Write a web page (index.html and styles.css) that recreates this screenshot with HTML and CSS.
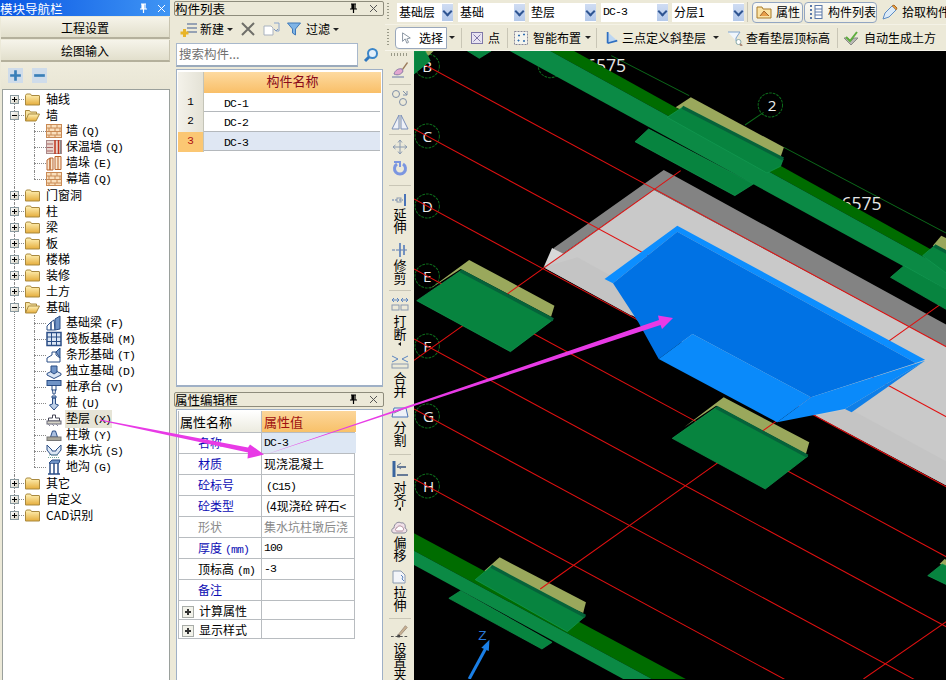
FILE: index.html
```html
<!DOCTYPE html>
<html lang="zh-CN">
<head>
<meta charset="utf-8">
<title>模块导航栏</title>
<link rel="stylesheet" href="styles.css">
</head>
<body>
<svg class="defs" aria-hidden="true">
  <defs>
    <linearGradient id="fold" x1="0" y1="0" x2="0" y2="1"><stop offset="0" stop-color="#fff2b8"/><stop offset="1" stop-color="#e5ad3c"/></linearGradient>
    <symbol id="folder" viewBox="0 0 15 13"><path d="M.5 2.5 1.5 1h4l1 1.500h7.500a.5.5 0 0 1 .5.5v9H.5z" fill="url(#fold)" stroke="#a9893f"/></symbol>
    <symbol id="folderopen" viewBox="0 0 15 13"><path d="M.5 12V1.500h4l1 1.500h6v2" fill="#f6e2a0" stroke="#a9893f"/><path d="M.5 12 3.500 5H14.500l-3.500 7z" fill="url(#fold)" stroke="#a9893f"/></symbol>
    <symbol id="brick" viewBox="0 0 16 16"><rect x=".5" y="1.500" width="15" height="13" fill="#f9dfbd" stroke="#c98a55"/><path d="M0 5h16M0 8.500h16M0 12h16M5 1.500V5M11 1.500V5M3 5v3.500M9 5v3.500M14 5v3.500M5 8.500V12M11 8.500V12M3 12v2.500M9 12v2.500" stroke="#c98a55" fill="none"/></symbol>
    <symbol id="insul" viewBox="0 0 16 16"><rect x=".5" y="1.500" width="15" height="13" fill="#e8d4cc" stroke="#a88"/><path d="M1 5h6M1 8.500h6M1 12h6" stroke="#a66" fill="none"/><path d="M9 1v14M12.500 1v14" stroke="#c0341c" stroke-width="1.500"/><path d="M14.500 1v14" stroke="#888"/></symbol>
    <symbol id="pier" viewBox="0 0 16 16"><path d="M1 5 4 3v12H1zM4 3h3v12H4zM9 1.500h6v13H9z" fill="#fbe8d0" stroke="#b9652f"/><path d="M12 1.500v13" stroke="#b9652f"/></symbol>
    <symbol id="fbeam" viewBox="0 0 16 16"><path d="M1 15V11l4-4V15zM5 7l3-2 1 10H5z" fill="#fff" stroke="#2b4e86"/><path d="M9 4l5-3v13l-5 1z" fill="#6f93c6" stroke="#2b4e86"/></symbol>
    <symbol id="fraft" viewBox="0 0 16 16"><rect x="1" y="1.500" width="14" height="13" fill="#dbe6f4" stroke="#2b4e86" stroke-width="1.500"/><path d="M5.500 1.500v13M10.500 1.500v13M1 6h14M1 10.500h14" stroke="#2b4e86"/></symbol>
    <symbol id="fstrip" viewBox="0 0 16 16"><path d="M1 15h13v-4L10 8V5H6v3l-5 3z" fill="#fff" stroke="#2b4e86"/><path d="M10 5l4-4v10z" fill="#6f93c6" stroke="#2b4e86"/></symbol>
    <symbol id="fisol" viewBox="0 0 16 16"><path d="M1 10.500 8 7l7 3.500v1.500l-7 3.500-7-3.500z" fill="#dbe6f4" stroke="#2b4e86"/><path d="M5 3h6v6L8 11 5 9z" fill="#6f93c6" stroke="#2b4e86"/></symbol>
    <symbol id="fcap" viewBox="0 0 16 16"><rect x="1" y="1.500" width="14" height="5" fill="#6f93c6" stroke="#2b4e86"/><path d="M6 6.500h4V11H6zM5.500 11h1L7 15h2l.5-4h1" fill="#fff" stroke="#2b4e86"/></symbol>
    <symbol id="fpile" viewBox="0 0 16 16"><path d="M6 1h4v2H6zM6.500 3h3v6l3 1-4.500 5-4.500-5 3-1z" fill="#bed0e8" stroke="#2b4e86"/></symbol>
    <symbol id="fpad" viewBox="0 0 16 16"><path d="M6.500 4h3v3h4v3h-11V7h4z" fill="#fff" stroke="#445"/><rect x="1" y="10" width="14" height="3" fill="#d6d4c8" stroke="#667"/><path d="M2 13l2 2M6 13l2 2M10 13l2 2" stroke="#889"/></symbol>
    <symbol id="fcol" viewBox="0 0 16 16"><path d="M6.500 4h3l2 6h-7z" fill="#aac0e0" stroke="#2b4e86"/><rect x="1" y="10" width="14" height="3.500" fill="#a8a69a" stroke="#777"/></symbol>
    <symbol id="fsump" viewBox="0 0 16 16"><path d="M1 2v5l4 5h6l4-5V2l-5 5v1H6V7z" fill="#dbe6f4" stroke="#2b4e86"/><path d="M3 12h10M2 14.500h12" stroke="#7a9" stroke-dasharray="1 1"/></symbol>
    <symbol id="fditch" viewBox="0 0 16 16"><path d="M2 15h12M3 4h10M4 4v11M12 4v11M8 4v11" stroke="#2b4e86" stroke-width="1.500" fill="none"/><path d="M3 4l3-3h8l-1 3" fill="#6f93c6" stroke="#2b4e86"/></symbol>
    <symbol id="pin" viewBox="0 0 9 11"><path d="M2 1h5M3 1v5M6 1v5M1 6h7M4.500 6v4" stroke="currentColor" stroke-width="1.200" fill="none"/><rect x="3" y="1" width="2" height="5" fill="currentColor"/></symbol>
    <symbol id="cross" viewBox="0 0 9 9"><path d="M1 1l7 7M8 1 1 8" stroke="currentColor" fill="none"/></symbol>
    <symbol id="grip" viewBox="0 0 4 20"><path d="M1 1v18" stroke="#9a9a88" stroke-dasharray="1 2" stroke-width="2"/></symbol>
  </defs>
</svg>

<div class="app">
  <aside class="nav">
    <div class="nav-title"><span class="nav-name">模块导航栏</span><svg class="pin"><use href="#pin"/></svg><svg class="close"><use href="#cross"/></svg></div>
    <div class="nav-btn">工程设置</div>
    <div class="nav-btn">绘图输入</div>
    <div class="nav-tools">
      <span class="pm"><svg viewBox="0 0 14 14"><path d="M7 2v10M2 7h10" stroke="#3a7fb8" stroke-width="2.500"/></svg></span>
      <span class="pm"><svg viewBox="0 0 14 14"><path d="M2 7h10" stroke="#3a7fb8" stroke-width="2.500"/></svg></span>
    </div>
    <div class="tree">
      <div class="node"><div class="row"><i class="exp plus"></i><svg class="fld"><use href="#folder"/></svg><span>轴线</span></div></div>
      <div class="node">
        <div class="row"><i class="exp"></i><svg class="fld"><use href="#folderopen"/></svg><span>墙</span></div>
        <div class="kids">
          <div class="kid"><svg class="ico"><use href="#brick"/></svg><span>墙<b class="key">(Q)</b></span></div>
          <div class="kid"><svg class="ico"><use href="#insul"/></svg><span>保温墙<b class="key">(Q)</b></span></div>
          <div class="kid"><svg class="ico"><use href="#pier"/></svg><span>墙垛<b class="key">(E)</b></span></div>
          <div class="kid"><svg class="ico"><use href="#brick"/></svg><span>幕墙<b class="key">(Q)</b></span></div>
        </div>
      </div>
      <div class="node"><div class="row"><i class="exp plus"></i><svg class="fld"><use href="#folder"/></svg><span>门窗洞</span></div></div>
      <div class="node"><div class="row"><i class="exp plus"></i><svg class="fld"><use href="#folder"/></svg><span>柱</span></div></div>
      <div class="node"><div class="row"><i class="exp plus"></i><svg class="fld"><use href="#folder"/></svg><span>梁</span></div></div>
      <div class="node"><div class="row"><i class="exp plus"></i><svg class="fld"><use href="#folder"/></svg><span>板</span></div></div>
      <div class="node"><div class="row"><i class="exp plus"></i><svg class="fld"><use href="#folder"/></svg><span>楼梯</span></div></div>
      <div class="node"><div class="row"><i class="exp plus"></i><svg class="fld"><use href="#folder"/></svg><span>装修</span></div></div>
      <div class="node"><div class="row"><i class="exp plus"></i><svg class="fld"><use href="#folder"/></svg><span>土方</span></div></div>
      <div class="node">
        <div class="row"><i class="exp"></i><svg class="fld"><use href="#folderopen"/></svg><span>基础</span></div>
        <div class="kids">
          <div class="kid"><svg class="ico"><use href="#fbeam"/></svg><span>基础梁<b class="key">(F)</b></span></div>
          <div class="kid"><svg class="ico"><use href="#fraft"/></svg><span>筏板基础<b class="key">(M)</b></span></div>
          <div class="kid"><svg class="ico"><use href="#fstrip"/></svg><span>条形基础<b class="key">(T)</b></span></div>
          <div class="kid"><svg class="ico"><use href="#fisol"/></svg><span>独立基础<b class="key">(D)</b></span></div>
          <div class="kid"><svg class="ico"><use href="#fcap"/></svg><span>桩承台<b class="key">(V)</b></span></div>
          <div class="kid"><svg class="ico"><use href="#fpile"/></svg><span>桩<b class="key">(U)</b></span></div>
          <div class="kid"><svg class="ico"><use href="#fpad"/></svg><span class="sel-node">垫层<b class="key">(X)</b></span></div>
          <div class="kid"><svg class="ico"><use href="#fcol"/></svg><span>柱墩<b class="key">(Y)</b></span></div>
          <div class="kid"><svg class="ico"><use href="#fsump"/></svg><span>集水坑<b class="key">(S)</b></span></div>
          <div class="kid"><svg class="ico"><use href="#fditch"/></svg><span>地沟<b class="key">(G)</b></span></div>
        </div>
      </div>
      <div class="node"><div class="row"><i class="exp plus"></i><svg class="fld"><use href="#folder"/></svg><span>其它</span></div></div>
      <div class="node"><div class="row"><i class="exp plus"></i><svg class="fld"><use href="#folder"/></svg><span>自定义</span></div></div>
      <div class="node"><div class="row"><i class="exp plus"></i><svg class="fld"><use href="#folder"/></svg><span>CAD识别</span></div></div>
    </div>
  </aside>

  <section class="mid">
    <div class="ptitle"><span>构件列表</span><svg class="pin"><use href="#pin"/></svg><svg class="close"><use href="#cross"/></svg></div>
    <div class="mid-tools">
      <svg class="t-new" viewBox="0 0 17 17"><path d="M7 3h10M7 7h10M7 11h10" stroke="#7a8aa8" stroke-width="1.300"/><path d="M4.500 8v8M.5 12h8" stroke="#e8b428" stroke-width="3"/></svg>
      <span class="txt t-xin">新建</span><i class="dd t-dd"></i>
      <svg class="t-x" viewBox="0 0 14 14"><path d="M1 1l12 12M13 1 1 13" stroke="#6f6f6a" stroke-width="2"/></svg>
      <svg class="t-copy" viewBox="0 0 17 14"><path d="M1 4h7l2 2v7H1z" fill="#fff" stroke="#a9b2bf"/><path d="M11 1h5v8h-3" fill="none" stroke="#8aa4cc"/><path d="M11 7l2 2 2-2" stroke="#7f98c0" fill="none"/></svg>
      <svg class="t-fil" viewBox="0 0 14 14"><path d="M.5 1h13L8.500 7v6l-3-2V7z" fill="#7fb4e6" stroke="#3f79b8"/></svg>
      <span class="txt t-guo">过滤</span><i class="dd t-dd"></i>
    </div>
    <div class="search">
      <div class="search-in">搜索构件...</div>
      <svg class="search-ic" viewBox="0 0 16 16"><circle cx="9.500" cy="6.500" r="4.500" fill="#e4f0fb" stroke="#3b86c9" stroke-width="2"/><path d="M6 10l-4 4" stroke="#2f77bd" stroke-width="3"/></svg>
    </div>
    <div class="listbox">
      <div class="lgrid lhead"><div class="lc-idx"></div><div class="lc-name hd">构件名称</div></div>
      <div class="lgrid"><div class="lc-idx">1</div><div class="lc-name"><span class="mono">DC-1</span></div></div>
      <div class="lgrid"><div class="lc-idx">2</div><div class="lc-name"><span class="mono">DC-2</span></div></div>
      <div class="lgrid active"><div class="lc-idx">3</div><div class="lc-name"><span class="mono">DC-3</span></div></div>
    </div>
    <div class="ptitle ptitle2"><span>属性编辑框</span><svg class="pin"><use href="#pin"/></svg><svg class="close"><use href="#cross"/></svg></div>
    <div class="propbox">
      <div class="prow phead"><div class="pk">属性名称</div><div class="pv">属性值</div></div>
      <div class="prow"><div class="pk blue ind">名称</div><div class="pv picked mono">DC-3</div></div>
      <div class="prow"><div class="pk blue ind">材质</div><div class="pv">现浇混凝土</div></div>
      <div class="prow"><div class="pk blue ind">砼标号</div><div class="pv sub"><span class="mono">(C15)</span></div></div>
      <div class="prow"><div class="pk blue ind">砼类型</div><div class="pv sub">(4现浇砼 碎石&lt;</div></div>
      <div class="prow"><div class="pk gray ind">形状</div><div class="pv gray">集水坑柱墩后浇</div></div>
      <div class="prow"><div class="pk blue ind">厚度<b class="key">(mm)</b></div><div class="pv mono">100</div></div>
      <div class="prow"><div class="pk ind">顶标高<b class="key">(m)</b></div><div class="pv mono">-3</div></div>
      <div class="prow"><div class="pk blue ind">备注</div><div class="pv"></div></div>
      <div class="prow short"><div class="pk"><i class="pbox"></i>计算属性</div><div class="pv"></div></div>
      <div class="prow short"><div class="pk"><i class="pbox"></i>显示样式</div><div class="pv"></div></div>
    </div>
  </section>

  <section class="right">
    <div class="tb tb1">
      <svg class="gripv"><use href="#grip"/></svg>
      <div class="cb w56 ml6"><span>基础层</span><i class="cb-arrow"></i></div>
      <div class="cb w67 ml5"><span>基础</span><i class="cb-arrow"></i></div>
      <div class="cb w67 ml4"><span>垫层</span><i class="cb-arrow"></i></div>
      <div class="cb w67 ml5"><span class="mono">DC-3</span><i class="cb-arrow"></i></div>
      <div class="cb w72 ml4"><span>分层1</span><i class="cb-arrow"></i></div>
      <i class="sep ml3"></i>
      <div class="tg tg-a">
        <svg class="i16" viewBox="0 0 16 16"><path d="M1 3h5l1 2h8v9H1z" fill="#fbe3a4" stroke="#a87b2a"/><path d="M4 12l4-5 5 5" fill="#e8a04a" stroke="#a0662a"/></svg>
        <span>属性</span>
      </div>
      <div class="tg tg-b">
        <svg class="i16" viewBox="0 0 16 16"><path d="M3 2h2M3 6h2M3 10h2M3 14h2" stroke="#5a78a8" stroke-width="2"/><rect x="8" y="1.500" width="7" height="13" fill="#fff" stroke="#5a78a8"/><path d="M8 5h7M8 8h7M8 11h7" stroke="#5a78a8"/></svg>
        <span>构件列表</span>
      </div>
      <svg class="i16 ml5" viewBox="0 0 16 16"><path d="M1 15l2-6 7-7 4 4-7 7z" fill="#dbeaf8" stroke="#5d8cc4"/><path d="M10 2l2-1 3 3-1 2" fill="#e89a3a" stroke="#a86a28"/></svg>
      <span class="txt ml4 nowrap">拾取构件</span>
    </div>
    <div class="tb tb2">
      <svg class="gripv"><use href="#grip"/></svg>
      <div class="pick ml4">
        <svg class="i12" viewBox="0 0 12 14"><path d="M2 1v10l3-3 2 5 2-1-2-4 4-1z" fill="#fff" stroke="#7a8794"/></svg>
        <span>选择</span>
      </div>
      <i class="dd ml2"></i>
      <i class="sep ml6"></i>
      <svg class="i12 ml9" viewBox="0 0 12 12"><rect x=".5" y=".5" width="11" height="11" fill="#e9e4f2" stroke="#7f78a8"/><path d="M2.500 2.500l7 7M9.500 2.500l-7 7" stroke="#7f78a8"/></svg>
      <span class="txt ml5">点</span>
      <i class="sep ml7"></i>
      <svg class="i14 ml6" viewBox="0 0 14 14"><rect x=".5" y=".5" width="13" height="13" fill="#f4f4ee" stroke="#889" stroke-dasharray="2 1"/><path d="M4 4.500h2M3.500 9.500h2M9 3.500h2M9 10h2M10 2.500v2M10 9v2M4.500 8.500v2M5 3.500v2" stroke="#2d6db0"/></svg>
      <span class="txt ml5">智能布置</span>
      <i class="dd ml4"></i>
      <i class="sep ml5"></i>
      <svg class="i14 ml8" viewBox="0 0 14 16"><path d="M2 1v13l11-3z" fill="#bcd6f2"/><path d="M2 1v13M2 14l11-3" stroke="#2f6fc0" stroke-width="2"/></svg>
      <span class="txt ml3">三点定义斜垫层</span>
      <i class="dd ml7"></i>
      <svg class="i16 ml8" viewBox="0 0 16 16"><path d="M1 2h12L9 8v3" fill="#f0f6fc" stroke="#7fa3cc"/><circle cx="11.500" cy="12" r="2.500" fill="#fff" stroke="#8aa"/><path d="M13 14l2 2" stroke="#a87" stroke-width="2"/></svg>
      <span class="txt ml3">查看垫层顶标高</span>
      <i class="sep ml7"></i>
      <svg class="i16 ml5" viewBox="0 0 16 16"><path d="M1 8l7 7 7-7H11L8 11 5 8z" fill="#b8b8b4" stroke="#8a8a86"/><path d="M3 7l4 4 7-9" stroke="#5fae3e" stroke-width="2" fill="none"/></svg>
      <span class="txt ml5">自动生成土方</span>
    </div>
    <div class="work">
      <div class="vbar">
        <div class="vgrip"></div>
        <svg class="v18 mt5" viewBox="0 0 18 18"><path d="M11 8 16 1l1 1-5 7z" fill="#9a7a5a"/><path d="M3 13c1-4 5-6 8-5l1 2c-1 3-5 5-9 3z" fill="#e3a6d0" stroke="#8a7aa8"/><path d="M1 16h12" stroke="#a9b0c0" stroke-width="2"/></svg>
        <i class="vsep mt5"></i>
        <svg class="v16 mt5" viewBox="0 0 18 16"><circle cx="5" cy="4" r="3.500" fill="none" stroke="#8090a8"/><circle cx="12" cy="12" r="3.500" fill="none" stroke="#8090a8"/><path d="M12 1l4 4M16 1v4h-4" stroke="#8090a8" fill="none"/></svg>
        <svg class="v18 mt7" viewBox="0 0 18 18"><path d="M8 2v14H1zM10 2v14h7z" fill="#eef1f7" stroke="#7a8fb8"/></svg>
        <i class="vsep mt3"></i>
        <svg class="v16 mt4" viewBox="0 0 16 16"><path d="M8 1v14M1 8h14M8 1 6 3.500M8 1l2 2.500M8 15l-2-2.500M8 15l2-2.500M1 8l2.500-2M1 8l2.500 2M15 8l-2.500-2M15 8l-2.500 2" stroke="#8a9ab0" fill="none"/></svg>
        <svg class="v16 mt6" viewBox="0 0 16 16"><path d="M5 3a5.500 5.500 0 1 0 6 0" fill="none" stroke="#7b96e0" stroke-width="3"/><path d="M2 1h6v5" fill="none" stroke="#7b96e0" stroke-width="2"/></svg>
        <i class="vsep mt8"></i>
        <svg class="v14 mt7" viewBox="0 0 18 14"><path d="M14 1v12" stroke="#4a74b8" stroke-width="2"/><path d="M1 7h5M8 7h4" stroke="#5a7ab0" stroke-dasharray="2 1"/><rect x="6" y="5" width="4" height="4" fill="none" stroke="#8a9ab0"/></svg>
        <div class="vtxt mt1">延伸</div>
        <svg class="v16 mt8" viewBox="0 0 18 16"><path d="M9 1v14M13 3v10" stroke="#4a74b8" stroke-width="1.500"/><path d="M1 8h15" stroke="#5a7ab0" stroke-dasharray="3 1"/></svg>
        <div class="vtxt mt1">修剪</div>
        <i class="vsep mt5"></i>
        <svg class="v14 mt6" viewBox="0 0 18 14"><path d="M1 3h7M17 3h-7M1 3l2-2M1 3l2 2M8 3 6 1M8 3 6 5M10 3l2-2M10 3l2 2M17 3l-2-2M17 3l-2 2" stroke="#5a84c0" fill="none"/><rect x="1" y="8" width="7" height="5" fill="none" stroke="#8a9ab0"/><rect x="10" y="8" width="7" height="5" fill="none" stroke="#8a9ab0"/></svg>
        <div class="vtxt mt4">打断</div>
        <i class="vdd mt1"></i>
        <svg class="v14 mt9" viewBox="0 0 18 14"><path d="M1 1l6 3M1 7l6-3M17 1l-6 3M17 7l-6-3" stroke="#5a84c0" fill="none"/><rect x="1" y="9" width="16" height="4" fill="none" stroke="#8a9ab0"/></svg>
        <div class="vtxt mt3">合并</div>
        <svg class="v12 mt8" viewBox="0 0 18 12"><path d="M1 11h16L15 2H3z" fill="#eef1f7" stroke="#4a74b8"/><path d="M3 7l11-5" stroke="#7a8a9a"/></svg>
        <div class="vtxt mt3">分割</div>
        <i class="vsep mt7"></i>
        <svg class="v16 mt6" viewBox="0 0 18 16"><path d="M3 0v16" stroke="#39659f" stroke-width="3"/><path d="M6 6h9M6 14h11" stroke="#667a96" stroke-width="2"/><path d="M10 2 6 5l4 3" stroke="#667a96" fill="none"/></svg>
        <div class="vtxt mt4">对齐</div>
        <i class="vdd"></i>
        <svg class="v14 mt9" viewBox="0 0 18 14"><path d="M3 13C0 13 0 8 3 8 3 3 8 1 10 3c3-1 5 2 4 5 3 1 2 5-1 5z" fill="#f0e0e8" stroke="#8a8a9a"/><path d="M6 11c-2 0-2-3 0-3 0-2 4-3 5-1 2 0 2 4 0 4z" fill="#fff" stroke="#b08a9a"/></svg>
        <div class="vtxt mt2">偏移</div>
        <svg class="v14 mt8" viewBox="0 0 18 14"><path d="M2 1h8l4 4v8H2z" fill="#f3f5f9" stroke="#8a9ab0"/><path d="M10 5l2 2-1 2 2 2" stroke="#5a84c0" fill="none"/></svg>
        <div class="vtxt mt2">拉伸</div>
        <i class="vsep mt6"></i>
        <svg class="v16 mt5" viewBox="0 0 20 16"><path d="M8 11 16 1l2 2-8 9z" fill="#c8b090" stroke="#a09080"/><path d="M0 13h20" stroke="#444" stroke-dasharray="3 2"/><rect x="7" y="11" width="3" height="3" fill="#444"/></svg>
        <div class="vtxt mt2 vclip">设置夹点</div>
      </div>
      <div class="canvas">
        <svg class="scene" viewBox="-3 6 1572 1884" preserveAspectRatio="none">
          <!-- slab -->
          <polygon class="s-dark" points="410,597 735,363 1593,840 1593,905 705,422 400,640"/>
          <polygon class="s-edge" points="380,655 405,597 440,615"/>
          <polygon class="s-light" points="380,655 705,422 1593,905 1593,1322 1185,1100"/>
          <polygon class="s-shade" points="380,655 480,625 640,715 640,800"/>
          <polygon class="s-shade" points="1185,1100 1285,1080 1593,1250 1593,1322"/>
          <!-- axis labels -->
          <g class="bub">
            <circle cx="400" cy="50" r="36"/><circle cx="36" cy="51" r="36"/><circle cx="36" cy="261" r="36"/><circle cx="36" cy="471" r="36"/><circle cx="36" cy="681" r="36"/><circle cx="36" cy="891" r="36"/><circle cx="36" cy="1101" r="36"/><circle cx="36" cy="1311" r="36"/><circle cx="1050" cy="168" r="36"/>
          </g>
          <path class="guide" d="M580 20 810 140M975 228 1030 190M1090 295 1593 565"/>
          <g class="lbl">
            <text x="36" y="68">B</text><text x="36" y="278">C</text><text x="36" y="488">D</text><text x="36" y="698">E</text><text x="36" y="908">F</text><text x="40" y="1118">G</text><text x="40" y="1328">H</text><text x="1055" y="186">2</text>
          </g>
          <text class="dim" x="505" y="70">6575</text>
          <text class="dim" x="1260" y="482">6575</text>
          <!-- top bar -->
          <polygon class="g-dark" points="400,6 470,6 1593,640 1593,674"/>
          <polygon class="g-main" points="280,6 400,6 1593,674 1593,735"/>
          <!-- bottom bar -->
          <polygon class="g-dark" points="-3,1453 -3,1505 700,1890 800,1890"/>
          <polygon class="g-main" points="-3,1505 -3,1548 615,1890 700,1890"/>
          <!-- olive plates -->
          <polygon class="olive" points="770,175 815,145 1090,295 1080,325"/>
          <polygon class="olive" points="40,722 160,633 412,770 402,803 135,660"/>
          <polygon class="olive" points="795,1135 912,1045 1165,1180 1155,1215 890,1070"/>
          <polygon class="olive" points="205,1565 250,1525 505,1660 497,1692"/>
          <polygon class="olive" points="1530,590 1555,560 1593,580 1593,612"/>
          <polygon class="olive" points="20,6 55,6 40,20"/>
          <polygon class="olive" points="1550,1545 1565,1530 1593,1545 1593,1558"/>
          <!-- red grid -->
          <g class="red">
            <line x1="-3" y1="30" x2="1593" y2="906"/><line x1="-3" y1="240" x2="1593" y2="1116"/><line x1="-3" y1="450" x2="1593" y2="1326"/><line x1="-3" y1="660" x2="1593" y2="1536"/><line x1="-3" y1="870" x2="1593" y2="1746"/><line x1="-3" y1="1080" x2="1593" y2="1956"/><line x1="-3" y1="1290" x2="1593" y2="2166"/>
            <line x1="785" y1="365" x2="-3" y2="934"/><line x1="1593" y1="737" x2="370" y2="1620"/><line x1="1593" y1="1702" x2="1325" y2="1890"/>
          </g>
          <!-- blue pit -->
          <polygon class="b-rim" points="560,690 775,530 1507,932 1480,942 775,548 585,703"/>
          <polygon class="b-mid" points="585,703 775,548 1480,942 1170,1045 820,855 720,930 660,820"/>
          <polygon class="b-lit" points="720,930 820,855 1170,1045 1070,1120"/>
          <polygon class="b-lit" points="1170,1045 1507,935 1270,1080 1070,1120"/>
          <polygon class="b-rim2" points="1507,935 1290,1090 1270,1080"/>
          <!-- green pads -->
          <g class="pad">
            <polygon points="650,278 690,240 1000,405 945,440"/>
            <polygon points="745,205 790,175 1088,330 1080,352 1040,372"/>
            <polygon points="5,755 135,665 408,812 282,908"/>
            <polygon points="760,1168 890,1075 1160,1222 1035,1320"/>
            <polygon points="100,1648 135,1625 405,1780 375,1800"/>
            <polygon points="178,1592 225,1552 503,1702 450,1748"/>
            <polygon points="1405,685 1445,650 1593,735 1593,795"/>
            <polygon points="1500,620 1535,590 1593,622 1593,690"/>
            <polygon points="1515,1580 1558,1545 1593,1562 1593,1618"/>
            <polygon points="-3,6 30,6 45,35 -3,75"/>
            <polygon points="155,6 225,6 190,28"/>
          </g>
          <g class="pad-edge">
            <polyline points="790,175 1088,330"/><polyline points="135,665 408,812"/><polyline points="890,1075 1160,1222"/><polyline points="225,1552 503,1702"/><polyline points="1535,590 1593,622"/>
          </g>
          <path class="z-axis" d="M160 1890 208 1800"/>
          <polygon class="z-head" points="220,1772 196,1796 218,1806"/>
          <text class="z-lab" x="187" y="1772">Z</text>
        </svg>
      </div>
    </div>
  </section>
</div>

<svg class="arrows" viewBox="0 0 946 680" aria-hidden="true">
  <polygon points="100,419.500 248,447.500 250,444.500 264,454.500 247.500,458.500 248,452.500 100,420.500"/>
  <polygon points="263,455.500 659,320 658,315.500 673,318 662,329 660.500,325 "/>
</svg>
</body>
</html>
```
FILE: styles.css
```css
* { box-sizing: border-box; }
html, body { margin: 0; padding: 0; }
body {
  width: 946px; height: 680px; overflow: hidden;
  background: #ece9d8; color: #000;
  font: 12px/16px "Noto Sans CJK SC", "Noto Sans", sans-serif;
}
.defs { position: absolute; width: 0; height: 0; }
.app { display: flex; width: 946px; height: 680px; overflow: hidden; }
.mono { font-family: "Liberation Mono", monospace; font-size: 11.500px; letter-spacing: -.9px; }
.key { font-family: "Liberation Mono", monospace; font-size: 11.500px; letter-spacing: -.9px; font-weight: 400; margin-left: 3px; }
.nowrap { white-space: nowrap; }

/* navigation */
.nav { width: 170px; flex: none; display: flex; flex-direction: column; }
.nav-title { height: 16px; display: flex; align-items: center; color: #fff; background: linear-gradient(90deg, #0a57e4, #3f95f4); font-size: 12.500px; line-height: 15px; }
.nav-name { flex: 1; }
.pin { width: 9px; height: 11px; margin-right: 9px; flex: none; }
.close { width: 9px; height: 9px; margin-right: 4px; flex: none; }
.nav-btn { margin: 1px 0 0 1px; height: 22px; text-align: center; line-height: 22px; background: linear-gradient(#f6f4ea, #e2dfcc); border-bottom: 2px solid #b4b09c; border-right: 1px solid #c8c4b0; font-size: 12px; }
.nav-tools { height: 27px; display: flex; align-items: center; gap: 9px; padding-left: 7px; margin-left: 1px; background: linear-gradient(#efecdd, #e9e6d5); }
.pm { width: 15px; height: 15px; display: block; background: #cfdcea; }
.pm svg { display: block; width: 15px; height: 15px; }
.tree { flex: 1; margin: 0 0 0 2px; padding-top: 1px; background: #fff; border: 1px solid #9aa09c; border-bottom: 0; }
.node { position: relative; }
.node::after { content: ""; position: absolute; left: 11px; top: 0; bottom: 0; border-left: 1px dotted #8a8a8a; }
.node:first-child::after { top: 8px; }
.node:last-child::after { bottom: auto; height: 8px; }
.row, .kid { height: 16px; display: flex; align-items: center; white-space: nowrap; }
.row { position: relative; padding-left: 7px; }
.row::before { content: ""; position: absolute; left: 12px; top: 8px; width: 11px; border-top: 1px dotted #8a8a8a; }
.exp { position: relative; z-index: 1; width: 9px; height: 9px; flex: none; background: linear-gradient(135deg, #fff, #d4d0c0); border: 1px solid #8a9aa0; }
.exp::before { content: ""; position: absolute; left: 1px; top: 3px; width: 5px; height: 1px; background: #000; }
.exp.plus::after { content: ""; position: absolute; left: 3px; top: 1px; width: 1px; height: 5px; background: #000; }
.fld { position: relative; z-index: 1; width: 15px; height: 13px; margin-left: 6px; margin-right: 6px; flex: none; }
.kids { position: relative; margin-left: 31px; }
.kid { position: relative; padding-left: 12px; }
.kid::before { content: ""; position: absolute; left: 0; top: 8px; width: 12px; border-top: 1px dotted #8a8a8a; }
.kid::after { content: ""; position: absolute; left: 0; top: 0; bottom: 0; border-left: 1px dotted #8a8a8a; }
.kid:last-child::after { bottom: auto; height: 8px; }
.ico { width: 16px; height: 16px; margin-right: 4px; flex: none; }
.sel-node { background: #e6e4d6; margin-left: -1px; padding: 0 1px; }

/* middle column */
.mid { width: 210px; margin-left: 4px; flex: none; display: flex; flex-direction: column; }
.ptitle { height: 15px; margin-top: 1px; display: flex; align-items: center; border: 1px solid #8e8c7c; border-radius: 2px; font-size: 12.500px; line-height: 13px; }
.ptitle span { flex: 1; }
.ptitle .pin { margin-right: 11px; }
.ptitle .close { margin-right: 5px; color: #555; }
.ptitle2 { margin-top: 5px; }
.mid-tools { height: 27px; display: flex; align-items: center; position: relative; padding-left: 6px; }
.txt { font-size: 12px; white-space: nowrap; flex: none; }
.t-new { width: 17px; height: 17px; flex: none; }
.t-xin { margin-left: 3px; }
.t-dd { margin-left: 3px; }
.t-x { width: 14px; height: 14px; margin-left: 8px; flex: none; }
.t-copy { width: 17px; height: 14px; margin-left: 8px; flex: none; }
.t-fil { width: 14px; height: 14px; margin-left: 7px; flex: none; }
.t-guo { margin-left: 5px; }
.dd { display: block; flex: none; width: 0; height: 0; border: 3px solid transparent; border-top: 3px solid #222; border-bottom: 0; }
.search { height: 25px; display: flex; align-items: center; }
.search-in { width: 182px; height: 24px; margin-left: 2px; padding-left: 2px; line-height: 20px; background: #fff; color: #707070; border: 1px solid #a8b8cc; border-bottom: 2px solid #9aaabc; font-size: 12.500px; }
.search-ic { width: 16px; height: 16px; margin-left: 5px; }
.listbox { width: 207px; height: 319px; margin: 1px 0 0 2px; padding: 2px 2px 0 1px; background: #fff; border: 1px solid #9fb0c6; border-bottom-width: 2px; }
.lgrid { display: grid; grid-template-columns: 26px 177px; height: 19.300px; border-bottom: 1px solid #b4b8bc; }
.lhead { height: 21px; border-bottom: 0; }
.lc-idx { text-align: center; line-height: 18px; background: linear-gradient(90deg, #f4f2ea, #e4e2d6); border-right: 1px solid #c4c4b8; font-family: "Liberation Mono", monospace; font-size: 11px; }
.lc-name { padding-left: 20px; line-height: 18px; }
.lc-name.hd { padding: 0; text-align: center; line-height: 18px; font-size: 13px; color: #8a0a1a; background: linear-gradient(#fddaa0, #f9bf68); }
.active { background: #dfe7f3; }
.active .lc-idx { background: #fbc773; color: #b01010; }
.propbox { width: 207px; height: 271px; margin: 2px 0 0 2px; padding: 1px 27px 0 1px; background: #fff; border: 1px solid #9fb0c6; border-bottom: 0; }
.prow { display: grid; grid-template-columns: 83px 94px; height: 21px; border-bottom: 1px solid #b8bcc0; border-left: 1px solid #b8bcc0; border-right: 1px solid #b8bcc0; }
.short { height: 19px; }
.pk, .pv { line-height: 20px; padding-left: 2px; white-space: nowrap; overflow: hidden; }
.pk { border-right: 1px solid #b8bcc0; font-size: 12px; }
.pk.ind { padding-left: 19px; }
.blue { color: #0c0cb4; }
.gray { color: #8a8a8a; }
.sub { padding-left: 4px; }
.phead { height: 22px; }
.phead .pk { padding-left: 1px; font-size: 13px; line-height: 21px; background: linear-gradient(#fff, #ecebdf); }
.phead .pv { color: #a01010; font-size: 13px; line-height: 21px; background: linear-gradient(#fcd69a, #f8c169); }
.picked { background: #dde7f4; }
.pbox { display: inline-block; position: relative; width: 12px; height: 12px; margin: 0 5px 0 1px; vertical-align: -2px; background: #f2f2ea; border: 1px solid #a8aca8; }
.pbox::before { content: ""; position: absolute; left: 2px; top: 4px; width: 6px; height: 2px; background: #333; }
.pbox::after { content: ""; position: absolute; left: 4px; top: 2px; width: 2px; height: 6px; background: #333; }

/* right side */
.right { flex: 1; margin-left: 1px; min-width: 0; display: flex; flex-direction: column; }
.tb { display: flex; align-items: center; overflow: hidden; padding-left: 2px; flex: none; }
.tb1 { height: 25px; border-bottom: 1px solid #f4f2e6; }
.tb2 { height: 26px; border-bottom: 1px solid #f8f6ec; }
.gripv { width: 4px; height: 20px; flex: none; }
.cb { height: 19px; display: flex; align-items: center; justify-content: space-between; background: #fff; padding-left: 2px; flex: none; white-space: nowrap; }
.w56 { width: 56px; } .w67 { width: 67px; } .w72 { width: 72px; }
.cb-arrow { position: relative; width: 11px; height: 17px; background: linear-gradient(#cfdcf3, #b4c9ea); }
.cb-arrow::after { content: ""; position: absolute; left: 2px; top: 4px; width: 5px; height: 5px; border-right: 2px solid #2f5592; border-bottom: 2px solid #2f5592; transform: rotate(45deg); }
.sep { display: block; width: 1px; height: 20px; background: #c9c6b6; flex: none; }
.tg { height: 21px; display: flex; align-items: center; flex: none; background: linear-gradient(#faf9f3, #f0eee2); border: 1px solid #93a6c2; border-radius: 4px; white-space: nowrap; }
.tg-a { width: 51px; margin-left: 4px; padding-left: 3px; gap: 4px; }
.tg-b { width: 73px; margin-left: 1px; padding-left: 2px; gap: 5px; }
.i12 { width: 12px; height: 12px; flex: none; }
.i14 { width: 14px; height: 14px; flex: none; }
.i16 { width: 16px; height: 16px; flex: none; }
.pick { width: 52px; height: 22px; display: flex; align-items: center; gap: 7px; padding-left: 4px; background: #fff; border: 1px solid #9aa8bc; border-radius: 4px 0 0 4px; flex: none; }
.ml2 { margin-left: 2px; } .ml3 { margin-left: 3px; } .ml4 { margin-left: 4px; } .ml5 { margin-left: 5px; } .ml6 { margin-left: 6px; } .ml7 { margin-left: 7px; } .ml8 { margin-left: 8px; } .ml9 { margin-left: 9px; }
.work { flex: 1; min-height: 0; display: flex; }
.vbar { width: 29px; flex: none; display: flex; flex-direction: column; align-items: center; overflow: hidden; }
.vgrip { width: 18px; height: 3px; margin-top: 2px; flex: none; background: repeating-linear-gradient(90deg, #9a9a88 0 1px, transparent 1px 3px); }
.vsep { display: block; width: 22px; height: 1px; background: #c9c6b6; flex: none; }
.v12, .v14, .v16, .v18 { width: 18px; flex: none; }
.v12 { height: 12px; } .v14 { height: 14px; } .v16 { height: 16px; } .v18 { height: 18px; }
.vtxt { writing-mode: vertical-rl; font-size: 13px; line-height: 14px; height: 26px; flex: none; white-space: nowrap; }
.vclip { height: 52px; }
.vdd { display: block; width: 0; height: 0; flex: none; border: 2px solid transparent; border-right: 3px solid #111; border-left: 0; }
.mt1 { margin-top: 1px; } .mt2 { margin-top: 2px; } .mt3 { margin-top: 3px; } .mt4 { margin-top: 4px; } .mt5 { margin-top: 5px; } .mt6 { margin-top: 6px; } .mt7 { margin-top: 7px; } .mt8 { margin-top: 8px; } .mt9 { margin-top: 9px; }

/* canvas */
.canvas { flex: 1; min-width: 0; background: #000; overflow: hidden; }
.scene { display: block; width: 532px; height: 628px; }
.s-dark { fill: #838383; }
.s-edge { fill: #d8d8d8; }
.s-light { fill: #c9c9c9; }
.s-shade { fill: #c4c4c4; }
.bub circle { fill: none; stroke: #0c6a1a; stroke-width: 3; stroke-dasharray: 8 3; }
.guide { fill: none; stroke: #0c6a1a; stroke-width: 3; }
.lbl text { fill: #ececec; font: 45px "Open Sans", sans-serif; text-anchor: middle; }
.dim { fill: #e6e6e6; font: 52px "Open Sans", sans-serif; }
.g-dark { fill: #006c00; }
.g-main { fill: #0b8a45; }
.olive { fill: #9aa85c; }
.red line { stroke: #e01010; stroke-width: 3; }
.b-rim { fill: #0c8eff; }
.b-mid { fill: #0072e4; }
.b-lit { fill: #0a8afa; }
.b-rim2 { fill: #0f7fe8; }
.pad polygon { fill: #07843f; stroke: #139a52; stroke-width: 2; }
.pad-edge polyline { fill: none; stroke: #05633a; stroke-width: 10; }
.z-axis { fill: none; stroke: #1a7fe6; stroke-width: 9; }
.z-head { fill: #1a7fe6; }
.z-lab { fill: #2a78d8; font: 40px "Liberation Sans", sans-serif; }
.arrows { position: absolute; left: 0; top: 0; width: 946px; height: 680px; pointer-events: none; }
.arrows polygon { fill: #e83ae6; }
```
